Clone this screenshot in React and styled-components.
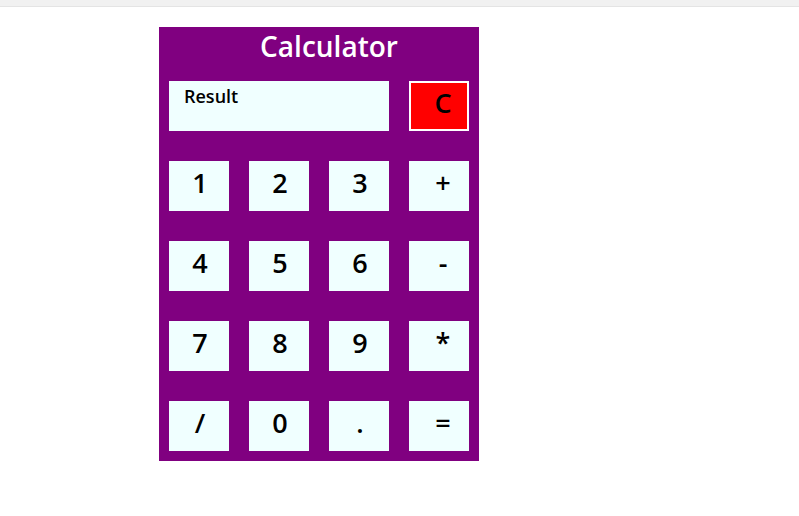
import styled, { createGlobalStyle } from 'styled-components';

const GlobalStyle = createGlobalStyle`
  body {
    margin: 0;
    background: #fff;
    font-family: "Open Sans", "Noto Sans", sans-serif;
  }
`;

const TopBar = styled.div`
  height: 6px;
  background: #f1f1f1;
  border-bottom: 1px solid #e4e4e4;
`;

const Page = styled.div`
  padding: 20px 0 0 159px;
`;

const Panel = styled.div`
  width: 320px;
  box-sizing: border-box;
  background: #800080;
  padding: 0 10px 10px;
`;

const Title = styled.h1`
  margin: 0;
  height: 42px;
  padding: 2px 0 0 20px;
  box-sizing: border-box;
  text-align: center;
  color: #fff;
  font-size: 28px;
  font-weight: 600;
  line-height: 34px;
`;

const Grid = styled.div`
  display: grid;
  grid-template-columns: repeat(4, 60px);
  grid-auto-rows: 50px;
  column-gap: 20px;
  row-gap: 30px;
  margin-top: 12px;
`;

const Display = styled.div`
  grid-column: span 3;
  background: #f0ffff;
  padding: 4px 15px;
  box-sizing: border-box;
  font-size: 18px;
  font-weight: 600;
  color: #000;
  line-height: 22px;
`;

const Key = styled.button`
  border: ${(p) => (p.$clear ? '2px solid #fff' : 'none')};
  background: ${(p) => (p.$clear ? '#ff0000' : '#f0ffff')};
  color: #000;
  font-family: inherit;
  font-size: 27px;
  font-weight: 600;
  line-height: 30px;
  padding: 0 0 6px ${(p) => (p.$op ? '8px' : '2px')};
  margin: 0;
  cursor: pointer;
`;

const rows = [
  ['1', '2', '3', '+'],
  ['4', '5', '6', '-'],
  ['7', '8', '9', '*'],
  ['/', '0', '.', '='],
];

export default function App() {
  return (
    <>
      <GlobalStyle />
      <TopBar />
      <Page>
        <Panel>
          <Title>Calculator</Title>
          <Grid>
            <Display>Result</Display>
            <Key $clear $op>C</Key>
            {rows.flat().map((k, i) => (
              <Key key={k} $op={i % 4 === 3}>{k}</Key>
            ))}
          </Grid>
        </Panel>
      </Page>
    </>
  );
}
